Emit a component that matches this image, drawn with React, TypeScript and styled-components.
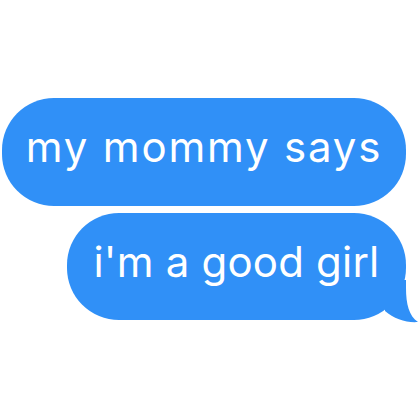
import React from "react";
import styled, { createGlobalStyle } from "styled-components";

const Global = createGlobalStyle`
  html, body { margin: 0; padding: 0; background: #ffffff; }
  body { font-family: Inter, "Noto Sans", sans-serif; }
`;

const Page = styled.div`
  width: 420px;
  height: 420px;
  box-sizing: border-box;
  display: flex;
  flex-direction: column;
  align-items: flex-end;
  padding: 98px 14px 0 0;
  gap: 7px;
`;

const Bubble = styled.div<{ $w: number; $h: number; $track: number }>`
  position: relative;
  width: ${(p) => p.$w}px;
  height: ${(p) => p.$h}px;
  box-sizing: border-box;
  background: #3090f7;
  border-radius: 52px;
  display: flex;
  align-items: center;
  justify-content: center;
  padding: 0 0 10px 0;
  color: #ffffff;
  font-family: Inter, "Noto Sans", sans-serif;
  font-size: 42px;
  font-weight: 400;
  letter-spacing: ${(p) => p.$track}px;
  white-space: nowrap;
  line-height: 1;
`;

const Tail = styled.svg`
  position: absolute;
  right: -14px;
  bottom: -3px;
  width: 40px;
  height: 43px;
`;

export default function App() {
  return (
    <>
      <Global />
      <Page>
        <Bubble $w={404} $h={108} $track={1.8}>my mommy says</Bubble>
        <Bubble $w={339} $h={107} $track={0.2}>
          i'm a good girl
          <Tail viewBox="0 0 40 43">
            <path
              d="M26 0 L26 8 C26 24 29 36 38 42 C27 43 14 39 5 31 L5 0 Z"
              fill="#3090f7"
            />
          </Tail>
        </Bubble>
      </Page>
    </>
  );
}
